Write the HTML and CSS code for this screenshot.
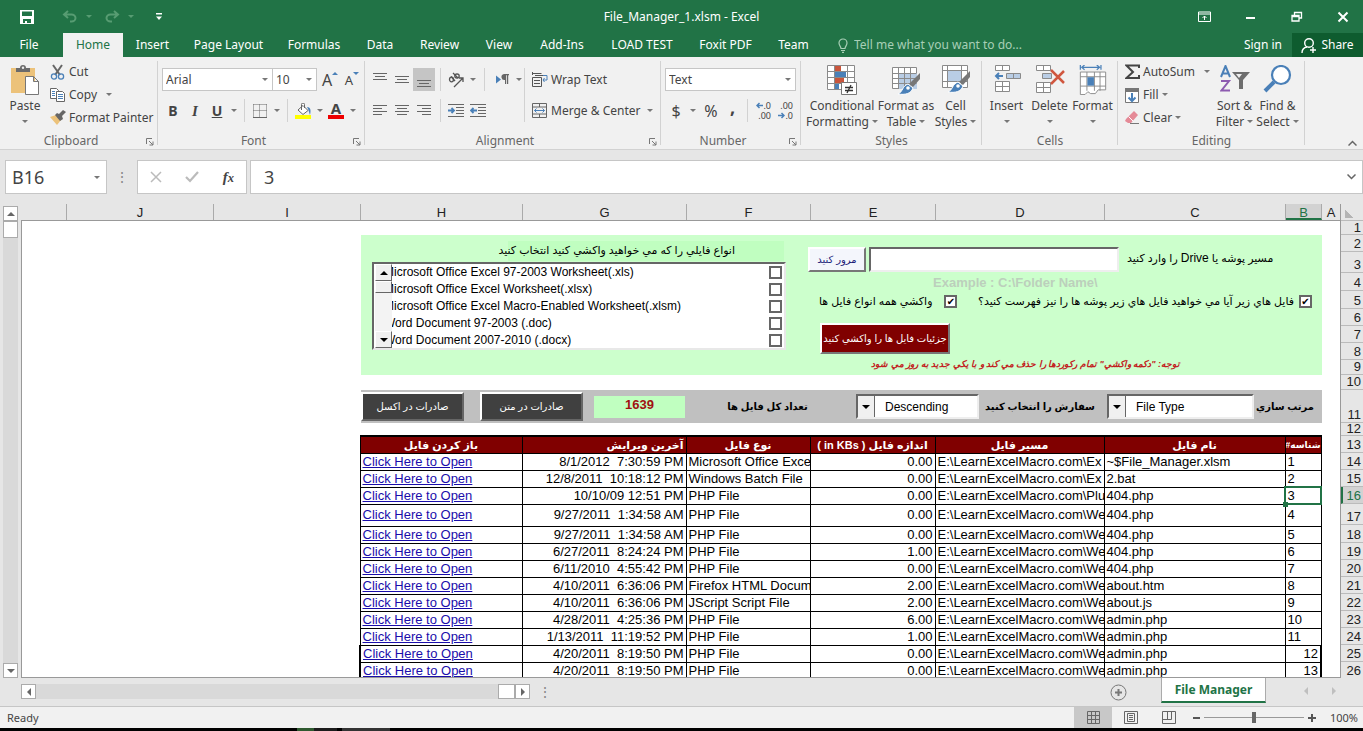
FILE: index.html
```html
<!DOCTYPE html>
<html lang="en">
<head>
<meta charset="utf-8">
<title>File_Manager_1.xlsm - Excel</title>
<link rel="stylesheet" href="styles.css">
</head>
<body>
<header class="titlebar">
  <div class="quick">
    <button class="bare save" aria-label="Save"><svg width="14" height="14" viewBox="0 0 14 14"><path fill="#fff" fill-rule="evenodd" d="M0 0h14v14H0zM2 1.500v4.500h10V1.500zM3 9v4h2v-2h2v2h4V9z"/></svg></button>
    <button class="bare undo" aria-label="Undo"><svg width="16" height="13" viewBox="0 0 16 13" fill="none" stroke="#579c72" stroke-width="2"><path d="M6 1 2 4.500 6 8M2 4.500h7.500a4 3.500 0 0 1 0 7H8"/></svg><i class="caret dim"></i></button>
    <button class="bare redo" aria-label="Redo"><svg width="16" height="13" viewBox="0 0 16 13" fill="none" stroke="#579c72" stroke-width="2"><path d="M10 1l4 3.500L10 8M14 4.500H6.500a4 3.500 0 0 0 0 7H8"/></svg><i class="caret dim"></i></button>
    <button class="bare more" aria-label="Customize"><svg width="7" height="8" viewBox="0 0 7 8" fill="#fff"><path d="M0 0h6v1.500H0zM0 3.500h6L3 7z"/></svg></button>
  </div>
  <h1 class="title">File_Manager_1.xlsm - Excel</h1>
  <div class="window-buttons">
    <button class="bare" aria-label="Ribbon options"><svg width="14" height="12" viewBox="0 0 14 12" fill="none" stroke="#fff"><path d="M.5 1h12v9.500H.5zM.5 3h12M6.500 9V5M4.500 7l2-2 2 2"/></svg></button>
    <button class="bare" aria-label="Minimize"><svg width="12" height="12" viewBox="0 0 12 12"><path fill="#fff" d="M1 6h9v2H1z"/></svg></button>
    <button class="bare" aria-label="Restore"><svg width="12" height="12" viewBox="0 0 12 12" fill="none" stroke="#fff" stroke-width="1.300"><path d="M1 4.500h7V10H1zM1 5.500h7M3.500 4V1.500h7V7H8"/></svg></button>
    <button class="bare" aria-label="Close"><svg width="12" height="12" viewBox="0 0 12 12" stroke="#fff" stroke-width="2"><path d="M1.500 1.500l9 9M10.500 1.500l-9 9"/></svg></button>
  </div>
</header>
<nav class="tabs">
  <div class="tab-list">
    <button class="tab file">File</button><button class="tab active">Home</button><button class="tab">Insert</button><button class="tab">Page Layout</button><button class="tab">Formulas</button><button class="tab">Data</button><button class="tab">Review</button><button class="tab">View</button><button class="tab">Add-Ins</button><button class="tab">LOAD TEST</button><button class="tab">Foxit PDF</button><button class="tab">Team</button>
  </div>
  <label class="tell"><svg width="10" height="15" viewBox="0 0 10 15" fill="none" stroke="#a8cfb6" stroke-width="1.200"><path d="M3 10.500c0-2-2-3-2-5.500a4 4 0 0 1 8 0c0 2.500-2 3.500-2 5.500zM3 12.500h4M4 14.300h2"/></svg><input type="text" placeholder="Tell me what you want to do..." aria-label="Tell me"></label>
  <button class="bare sign-in">Sign in</button>
  <button class="bare share"><svg width="16" height="17" viewBox="0 0 16 17" fill="none" stroke="#fff" stroke-width="1.400"><circle cx="8" cy="6" r="4.300"/><path d="M1 16c0-4 2-5.500 5-6M12 10v6M9 13h6"/></svg>Share</button>
</nav>

<section class="ribbon">
  <div class="group clipboard">
    <div class="group-body">
      <button class="big paste"><svg width="30" height="30" viewBox="0 0 30 30"><path fill="#ecc27a" d="M1 3h24v25H1z"/><path fill="#6b6b6b" d="M6 7V3h4a3 3 0 0 1 6 0h4v4z"/><circle cx="13" cy="2.800" r="1.200" fill="#eee"/><path fill="#fff" stroke="#777" d="M15.500 11.500h8l5 5v13h-13zM23.500 11.500v5h5"/></svg>Paste<i class="caret"></i></button>
      <div class="stack">
        <button class="small"><svg width="16" height="16" viewBox="0 0 16 16" fill="none"><path stroke="#666" stroke-width="2" d="M3 1l7 10M12 1L5 11"/><g stroke="#4a80b8" stroke-width="1.300"><circle cx="4" cy="12.500" r="2.600"/><circle cx="11" cy="12.500" r="2.600"/></g></svg>Cut</button>
        <button class="small"><svg width="16" height="16" viewBox="0 0 16 16" fill="#fff" stroke="#666"><path d="M.5 1.500h6l2 2v8h-8z"/><path stroke="#4a80b8" d="M2 4.500h3M2 6.500h3M2 8.500h3"/><path d="M6.500 4.500h6l2 2v8h-8z"/><path stroke="#4a80b8" d="M8 7.500h5M8 9.500h5M8 11.500h5"/></svg>Copy<i class="caret after"></i></button>
        <button class="small"><svg width="16" height="16" viewBox="0 0 16 16"><path fill="#ecc27a" d="M0 7l6-2 5 5-4 5z"/><path fill="#666" d="M5 5l2-2 2 1 4-4 3 2-4 4 1 3-3 2z"/></svg>Format Painter</button>
      </div>
    </div>
    <div class="group-label">Clipboard<svg class="launch" width="8" height="8" viewBox="0 0 8 8" fill="none" stroke="#777"><path d="M.5 6V.5H6M3 3l4 4M7 3.500V7H3.500"/></svg></div>
  </div>

  <div class="group font">
    <div class="group-body rows">
      <div class="tool-row">
        <label class="combo family"><input type="text" value="Arial" aria-label="Font"><i class="caret"></i></label>
        <label class="combo size"><input type="text" value="10" aria-label="Font size"><i class="caret"></i></label>
        <button class="tool grow">A<i class="mark up"></i></button><button class="tool shrink">A<i class="mark down"></i></button>
      </div>
      <div class="tool-row">
        <button class="tool"><b>B</b></button><button class="tool"><em>I</em></button><button class="tool"><u>U</u></button><button class="drop" aria-label="Underline"><i class="caret"></i></button><span class="sep"></span>
        <button class="tool" aria-label="Borders"><svg width="14" height="14" viewBox="0 0 14 14" fill="none" stroke="#666"><path stroke-dasharray="1 1" d="M.5.5h13M.5.5v13M13.500.5v13M.5 6.500h13M6.500.5v13"/><path d="M0 13.500h14"/></svg></button><button class="drop" aria-label="Borders menu"><i class="caret"></i></button><span class="sep"></span>
        <button class="tool" aria-label="Fill color"><svg width="17" height="16" viewBox="0 0 17 16"><path fill="#ff0" d="M0 12h16v4H0z"/><path fill="#fff" stroke="#666" d="M8 2.500l5 5-5 4-5-4.500zM6.500 7V1.500a1.500 1.500 0 0 1 3 0V5"/><path fill="#4a80b8" d="M12 4c4 0 4 4 3 8-1-2-1-5-3-8z"/></svg></button><button class="drop" aria-label="Fill menu"><i class="caret"></i></button>
        <button class="tool color" aria-label="Font color">A</button><button class="drop" aria-label="Font color menu"><i class="caret"></i></button>
      </div>
    </div>
    <div class="group-label">Font<svg class="launch" width="8" height="8" viewBox="0 0 8 8" fill="none" stroke="#777"><path d="M.5 6V.5H6M3 3l4 4M7 3.500V7H3.500"/></svg></div>
  </div>

  <div class="group alignment">
    <div class="group-body">
      <div class="rows align-tools">
        <div class="tool-row">
          <button class="tool" aria-label="Top align"><svg width="14" height="16" viewBox="0 0 14 16" stroke="#666"><path d="M0 1.500h14M2 4.500h10M0 7.500h14"/></svg></button>
          <button class="tool" aria-label="Middle align"><svg width="14" height="16" viewBox="0 0 14 16" stroke="#666"><path d="M0 4.500h14M2 7.500h10M0 10.500h14"/></svg></button>
          <button class="tool pressed" aria-label="Bottom align"><svg width="14" height="16" viewBox="0 0 14 16" stroke="#666"><path d="M0 8.500h14M2 11.500h10M0 14.500h14"/></svg></button>
          <span class="sep"></span>
          <button class="tool" aria-label="Orientation"><svg width="17" height="17" viewBox="0 0 17 17" fill="none" stroke="#555" stroke-width="1.300"><path d="M6 16L15 7M11 7h4v4"/><ellipse cx="3.500" cy="8.500" rx="2" ry="2.300"/><path d="M3 5.500l4 4.500M5 2l5 5"/><ellipse cx="9" cy="5" rx="2.200" ry="2"/></svg></button><button class="drop" aria-label="Orientation menu"><i class="caret"></i></button>
          <span class="sep wide"></span>
          <button class="tool" aria-label="Text direction"><svg width="13" height="11" viewBox="0 0 13 11"><path fill="#4a80b8" d="M0 1.500l5 4-5 4z"/><path fill="#666" d="M8 0h5v1.200h-.8V10H11V1.200h-.8V10H9V6a3 3 0 0 1-1-6z"/></svg></button><button class="drop" aria-label="Direction menu"><i class="caret"></i></button>
        </div>
        <div class="tool-row">
          <button class="tool" aria-label="Left"><svg width="14" height="12" viewBox="0 0 14 12" stroke="#666"><path d="M0 .5h14M0 3.500h9M0 6.500h14M0 9.500h9"/></svg></button>
          <button class="tool" aria-label="Center"><svg width="14" height="12" viewBox="0 0 14 12" stroke="#666"><path d="M0 .5h14M2 3.500h10M0 6.500h14M2 9.500h10"/></svg></button>
          <button class="tool" aria-label="Right"><svg width="14" height="12" viewBox="0 0 14 12" stroke="#666"><path d="M0 .5h14M5 3.500h9M0 6.500h14M5 9.500h9"/></svg></button>
          <span class="sep"></span>
          <button class="tool" aria-label="Decrease indent"><svg width="16" height="14" viewBox="0 0 16 14" fill="none"><path stroke="#666" d="M0 .5h16M8 3.500h8M8 6.500h8M8 9.500h8M0 12.500h16"/><path stroke="#4a80b8" stroke-width="1.800" d="M0 6.500h6M3.500 4L6 6.500 3.500 9"/></svg></button>
          <button class="tool" aria-label="Increase indent"><svg width="16" height="14" viewBox="0 0 16 14" fill="none"><path stroke="#666" d="M0 .5h16M8 3.500h8M8 6.500h8M8 9.500h8M0 12.500h16"/><path stroke="#4a80b8" stroke-width="1.800" d="M1 6.500h6M3.500 4L1 6.500 3.500 9"/></svg></button>
        </div>
      </div>
      <div class="rows wrap-tools">
        <button class="small"><svg width="16" height="16" viewBox="0 0 16 16" fill="none" stroke="#555"><path d="M.5 0v3M.5 1.500h9M.5 5.500h9v9h-9zM2 8.500h6M2 11.500h6M3 3.500h8"/><path stroke="#4a80b8" d="M11 3.500h4v4.500h-4M12.500 6L11 8l1.500 2"/></svg>Wrap Text</button>
        <button class="small"><svg width="16" height="16" viewBox="0 0 16 16" fill="none" stroke="#666"><path d="M.5.5h14v14H.5zM.5 4h14M.5 11h14M7.500.5V4M7.500 11v3.500"/><path stroke="#4a80b8" d="M2.500 7.500h10M4.500 5.500l-2 2 2 2M10.500 5.500l2 2-2 2"/></svg>Merge &amp; Center<i class="caret near"></i></button>
      </div>
    </div>
    <div class="group-label">Alignment<svg class="launch" width="8" height="8" viewBox="0 0 8 8" fill="none" stroke="#777"><path d="M.5 6V.5H6M3 3l4 4M7 3.500V7H3.500"/></svg></div>
  </div>

  <div class="group number">
    <div class="group-body rows">
      <div class="tool-row">
        <label class="combo format"><input type="text" value="Text" aria-label="Number format"><i class="caret"></i></label>
      </div>
      <div class="tool-row">
        <button class="tool sign">$</button><button class="drop" aria-label="Currency menu"><i class="caret"></i></button><button class="tool sign percent-sign">%</button><button class="tool comma"><b>,</b></button><span class="sep"></span>
        <button class="tool decimals"><span><svg width="7" height="7" viewBox="0 0 7 7" fill="none" stroke="#4a80b8" stroke-width="1.500"><path d="M7 3.500H1M3.500 1L1 3.500 3.500 6"/></svg>.0</span><span>.00</span></button><button class="tool decimals wide"><span>.00</span><span><svg width="7" height="7" viewBox="0 0 7 7" fill="none" stroke="#4a80b8" stroke-width="1.500"><path d="M0 3.500h6M3.500 1L6 3.500 3.500 6"/></svg>.0</span></button>
      </div>
    </div>
    <div class="group-label">Number<svg class="launch" width="8" height="8" viewBox="0 0 8 8" fill="none" stroke="#777"><path d="M.5 6V.5H6M3 3l4 4M7 3.500V7H3.500"/></svg></div>
  </div>

  <div class="group styles">
    <div class="group-body">
      <button class="big"><svg width="30" height="30" viewBox="0 0 30 30"><path fill="#fff" stroke="#8a8a8a" d="M.5.5h27v24H.5zM7.500.5v24M20.500.5v24M.5 6.500h27M.5 12.500h27M.5 18.500h27"/><path fill="#c9553c" d="M8 1h6v5H8zM8 13h9v5H8z"/><path fill="#4a80b8" d="M8 7h11v5H8zM8 19h4v5H8z"/><path fill="#fff" stroke="#777" d="M14.500 17.500h15v12h-15z"/><path stroke="#333" stroke-width="1.300" d="M18 22.500h8M18 25.500h8M24 20l-4 8"/></svg><span>Conditional<br>Formatting<i class="caret inline"></i></span></button>
      <button class="big"><svg width="30" height="30" viewBox="0 0 30 30"><path fill="#fff" stroke="#8a8a8a" d="M1.500 2.500h24v21h-24z"/><path fill="#b9cde5" d="M8 8h18v16H8z"/><path fill="none" stroke="#8a8a8a" d="M1.500 8.500h24M1.500 13.500h24M1.500 18.500h24M7.500 2.500v21M13.500 2.500v21M19.500 2.500v21"/><path fill="#777" d="M29 8v6l-7 8-4-3z"/><path fill="#4a80b8" stroke="#fff" d="M17 19l5 4c-2 6-8 7-15 6 5-2 4-8 10-10z"/><circle cx="17" cy="23" r="1.800" fill="#fff"/></svg><span>Format as<br>Table<i class="caret inline"></i></span></button>
      <button class="big"><svg width="30" height="30" viewBox="0 0 30 30"><path fill="#fff" stroke="#8a8a8a" d="M1.500.5h25v22h-25zM1.500 5.500h25M1.500 16.500h25M6.500.5v22M20.500.5v22"/><path fill="#b9cde5" d="M7 6h13v10H7z"/><path fill="#777" d="M29 6v6l-7 8-4-3z"/><path fill="#4a80b8" stroke="#fff" d="M17 17l5 4c-2 6-8 7-15 6 5-2 4-8 10-10z"/><circle cx="17" cy="21" r="1.800" fill="#fff"/></svg><span>Cell<br>Styles<i class="caret inline"></i></span></button>
    </div>
    <div class="group-label">Styles</div>
  </div>

  <div class="group cells">
    <div class="group-body">
      <button class="big"><svg width="30" height="30" viewBox="0 0 30 30"><path fill="#fff" stroke="#8a8a8a" d="M3.500.5h14v5h-14zM10.500.5v5M3.500 16.500h14v10h-14zM10.500 16.500v10M3.500 21.500h14"/><path fill="#b9cde5" stroke="#8a8a8a" d="M14.500 8.500h14v5h-14zM21.500 8.500v5"/><path fill="none" stroke="#4a80b8" stroke-width="2" d="M11 11H4M7 8l-3 3 3 3"/></svg>Insert<i class="caret"></i></button>
      <button class="big"><svg width="30" height="30" viewBox="0 0 30 30"><path fill="#fff" stroke="#8a8a8a" d="M1.500.5h14v5h-14zM8.500.5v5M1.500 17.500h14v10h-14zM8.500 17.500v10M1.500 22.500h14"/><path fill="#b9cde5" stroke="#8a8a8a" d="M7.500 8.500h9v5h-9z"/><path fill="none" stroke="#d0573f" stroke-width="2.500" d="M16 5l13 13M29 6L16 19"/></svg>Delete<i class="caret"></i></button>
      <button class="big"><svg width="30" height="32" viewBox="0 0 30 32"><path fill="none" stroke="#4a80b8" stroke-width="1.300" d="M1.500 0v5M23.500 0v5M3 2.500h19M6 0L3 2.500 6 5M19 0l3 2.500L19 5"/><path fill="#fff" stroke="#8a8a8a" d="M1.500 7.500h27v19h-8l-3 4h-5l-3-2-3 3h-5zM1.500 12.500h27M1.500 22.500h27M8.500 7.500v20M16.500 7.500v20M22.500 7.500v20"/><path fill="#4a80b8" d="M9 13h7v9H9z"/></svg>Format<i class="caret"></i></button>
    </div>
    <div class="group-label">Cells</div>
  </div>

  <div class="group editing">
    <div class="group-body">
      <div class="stack">
        <button class="small"><svg width="15" height="16" viewBox="0 0 15 16" fill="none" stroke="#444" stroke-width="2"><path d="M14 4V1.500H1.500L8 8l-6.500 6H14V11"/></svg>AutoSum<i class="caret after"></i></button>
        <button class="small"><svg width="15" height="16" viewBox="0 0 15 16"><path fill="#fff" stroke="#777" d="M.5 1.500h13v14H.5z"/><path fill="#777" d="M0 1h14v4H0z"/><path fill="none" stroke="#4a80b8" stroke-width="2" d="M7 6v8M3.500 10.500L7 14l3.500-3.500"/></svg>Fill<i class="caret"></i></button>
        <button class="small"><svg width="15" height="16" viewBox="0 0 15 16"><path fill="#e58a97" d="M1 9l8-8 4 4-7 8H3l-3-2z"/><path stroke="#fff" d="M3.500 6.500l5 5"/><path stroke="#777" d="M5 13.500h9"/></svg>Clear<i class="caret"></i></button>
      </div>
      <button class="big sort"><svg width="30" height="30" viewBox="0 0 30 30" fill="none"><path stroke="#4a80b8" stroke-width="2" d="M1 12L5.500 1 10 12M2.500 8.500h6"/><path stroke="#8d5bb0" stroke-width="2" d="M1 16h8L1.500 25.500H10"/><path fill="#6d6d6d" d="M12 7h18l-7 8v9h-4v-9z"/><path fill="#eee" d="M16 9h6l-3 4z"/></svg><span>Sort &amp;<br>Filter<i class="caret inline"></i></span></button>
      <button class="big"><svg width="30" height="30" viewBox="0 0 30 30" fill="none" stroke="#4a80b8"><path stroke-width="4" d="M2 26L11 17"/><circle cx="18" cy="10" r="9" fill="#fff" stroke-width="2.200"/></svg><span>Find &amp;<br>Select<i class="caret inline"></i></span></button>
    </div>
    <div class="group-label">Editing</div>
  </div>
  <button class="bare collapse" aria-label="Collapse ribbon"><svg width="9" height="6" viewBox="0 0 9 6" fill="none" stroke="#666" stroke-width="1.500"><path d="M.5 5.500l4-4 4 4"/></svg></button>
</section>

<section class="formula-bar">
  <label class="name-box"><input type="text" value="B16" aria-label="Name box"><i class="caret"></i></label>
  <span class="dots">⋮</span>
  <div class="fx-box">
    <svg width="12" height="12" viewBox="0 0 12 12" stroke="#bbb" stroke-width="1.500"><path d="M1 1l10 10M11 1L1 11"/></svg>
    <svg width="14" height="12" viewBox="0 0 14 12" fill="none" stroke="#bbb" stroke-width="2.200"><path d="M1 6l4 4 8-9"/></svg>
    <span class="fx">f<small>x</small></span>
  </div>
  <label class="formula"><input type="text" value="3" aria-label="Formula"><svg width="9" height="6" viewBox="0 0 9 6" fill="none" stroke="#666" stroke-width="1.500"><path d="M.5.5l4 4 4-4"/></svg></label>
</section>

<main class="workbook">
  <div class="vscroll"><button class="arrow" aria-label="Scroll up"><i class="tri up"></i></button><span class="thumb"></span><span class="track"></span><button class="arrow" aria-label="Scroll down"><i class="tri down"></i></button></div>
  <div class="sheet">
    <div class="col-heads"><span class="blank"></span><span class="w-j">J</span><span class="w-j">I</span><span class="w-h">H</span><span class="w-g">G</span><span class="w-f">F</span><span class="w-e">E</span><span class="w-d">D</span><span class="w-c">C</span><span class="w-b selected">B</span><span class="w-a">A</span></div>
    <div class="canvas">
      <div class="area">
        <form class="options">
          <fieldset class="types">
            <legend dir="rtl">انواع فايلي را که مي خواهيد واکشي کنيد انتخاب کنيد</legend>
            <div class="listbox">
              <div class="old-scroll"><button type="button" aria-label="Up"><i class="tri up"></i></button><span class="old-thumb"></span><span class="old-track"></span><button type="button" aria-label="Down"><i class="tri down"></i></button></div>
              <div class="choices">
                <label><span>Microsoft Office Excel 97-2003 Worksheet(.xls)</span><input type="checkbox"></label>
                <label><span>Microsoft Office Excel Worksheet(.xlsx)</span><input type="checkbox"></label>
                <label><span>Microsoft Office Excel Macro-Enabled Worksheet(.xlsm)</span><input type="checkbox"></label>
                <label><span>Word Document 97-2003 (.doc)</span><input type="checkbox"></label>
                <label><span>Word Document 2007-2010 (.docx)</span><input type="checkbox"></label>
              </div>
            </div>
          </fieldset>
          <div class="source">
            <div class="path-row"><button type="button" class="browse">مرور کنيد</button><input id="path" class="path" type="text"><label for="path" dir="rtl">مسير پوشه يا <span class="latin">Drive</span> را وارد کنيد</label></div>
            <p class="example">Example : C:\Folder Name\</p>
            <div class="check-row">
              <label class="all"><span dir="rtl">واکشي همه انواع فايل ها</span><input type="checkbox" checked></label>
              <label class="sub"><span dir="rtl">فايل هاي زير آيا مي خواهيد فايل هاي زير پوشه ها را نيز فهرست کنيد؟</span><input type="checkbox" checked></label>
            </div>
            <button type="button" class="fetch">جزئيات فايل ها را واکشي کنيد</button>
            <p class="note" dir="rtl">توجه: "دکمه واکشي" تمام رکوردها را حذف مي کند و با يکي جديد به روز مي شود</p>
          </div>
        </form>
        <div class="sortbar">
          <button class="export">صادرات در اکسل</button>
          <button class="export text">صادرات در متن</button>
          <output class="count">1639</output>
          <span class="bar-label total" dir="rtl">تعداد کل فايل ها</span>
          <div class="picker"><i class="pick-arrow"></i><select id="order"><option>Descending</option></select></div>
          <label for="order" class="bar-label" dir="rtl">سفارش را انتخاب کنيد</label>
          <div class="picker"><i class="pick-arrow"></i><select id="by"><option>File Type</option></select></div>
          <label for="by" class="bar-label" dir="rtl">مرتب سازي</label>
        </div>
        <table class="files">
          <colgroup><col class="w-h"><col class="w-g"><col class="w-f"><col class="w-e"><col class="w-d"><col class="w-c"><col class="w-b"></colgroup>
          <thead><tr><th>باز کردن فايل</th><th class="end">آخرين ويرايش</th><th>نوع فايل</th><th dir="rtl">اندازه فايل ( in KBs )</th><th>مسير فايل</th><th>نام فايل</th><th class="id" dir="rtl">شناسه#</th></tr></thead>
          <tbody>
            <tr><td><a href="#">Click Here to Open</a></td><td class="end">8/1/2012  7:30:59 PM</td><td>Microsoft Office Exce</td><td class="end">0.00</td><td>E:\LearnExcelMacro.com\Ex</td><td>~$File_Manager.xlsm</td><td>1</td></tr>
            <tr><td><a href="#">Click Here to Open</a></td><td class="end">12/8/2011  10:18:12 PM</td><td>Windows Batch File</td><td class="end">0.00</td><td>E:\LearnExcelMacro.com\Ex</td><td>2.bat</td><td>2</td></tr>
            <tr><td><a href="#">Click Here to Open</a></td><td class="end">10/10/09 12:51 PM</td><td>PHP File</td><td class="end">0.00</td><td>E:\LearnExcelMacro.com\Plu</td><td>404.php</td><td class="current">3</td></tr>
            <tr class="tall"><td><a href="#">Click Here to Open</a></td><td class="end">9/27/2011  1:34:58 AM</td><td>PHP File</td><td class="end">0.00</td><td>E:\LearnExcelMacro.com\We</td><td>404.php</td><td>4</td></tr>
            <tr><td><a href="#">Click Here to Open</a></td><td class="end">9/27/2011  1:34:58 AM</td><td>PHP File</td><td class="end">0.00</td><td>E:\LearnExcelMacro.com\We</td><td>404.php</td><td>5</td></tr>
            <tr><td><a href="#">Click Here to Open</a></td><td class="end">6/27/2011  8:24:24 PM</td><td>PHP File</td><td class="end">1.00</td><td>E:\LearnExcelMacro.com\We</td><td>404.php</td><td>6</td></tr>
            <tr><td><a href="#">Click Here to Open</a></td><td class="end">6/11/2010  4:55:42 PM</td><td>PHP File</td><td class="end">0.00</td><td>E:\LearnExcelMacro.com\We</td><td>404.php</td><td>7</td></tr>
            <tr><td><a href="#">Click Here to Open</a></td><td class="end">4/10/2011  6:36:06 PM</td><td>Firefox HTML Docum</td><td class="end">2.00</td><td>E:\LearnExcelMacro.com\We</td><td>about.htm</td><td>8</td></tr>
            <tr><td><a href="#">Click Here to Open</a></td><td class="end">4/10/2011  6:36:06 PM</td><td>JScript Script File</td><td class="end">2.00</td><td>E:\LearnExcelMacro.com\We</td><td>about.js</td><td>9</td></tr>
            <tr><td><a href="#">Click Here to Open</a></td><td class="end">4/28/2011  4:25:36 PM</td><td>PHP File</td><td class="end">6.00</td><td>E:\LearnExcelMacro.com\We</td><td>admin.php</td><td>10</td></tr>
            <tr><td><a href="#">Click Here to Open</a></td><td class="end">1/13/2011  11:19:52 PM</td><td>PHP File</td><td class="end">1.00</td><td>E:\LearnExcelMacro.com\We</td><td>admin.php</td><td>11</td></tr>
            <tr class="thick"><td><a href="#">Click Here to Open</a></td><td class="end">4/20/2011  8:19:50 PM</td><td>PHP File</td><td class="end">0.00</td><td>E:\LearnExcelMacro.com\We</td><td>admin.php</td><td class="end">12</td></tr>
            <tr class="thick"><td><a href="#">Click Here to Open</a></td><td class="end">4/20/2011  8:19:50 PM</td><td>PHP File</td><td class="end">0.00</td><td>E:\LearnExcelMacro.com\We</td><td>admin.php</td><td class="end">13</td></tr>
          </tbody>
        </table>
      </div>
    </div>
  </div>
  <div class="row-heads"><span class="corner"></span><span class="r14">1</span><span>2</span><span class="r21">3</span><span class="r18">4</span><span class="r18">5</span><span>6</span><span>7</span><span>8</span><span class="r15">9</span><span class="r15">10</span><span class="r33">11</span><span class="r13">12</span><span>13</span><span>14</span><span>15</span><span class="selected">16</span><span class="r21">17</span><span class="r18">18</span><span>19</span><span>20</span><span>21</span><span>22</span><span>23</span><span>24</span><span>25</span><span>26</span></div>
</main>

<section class="sheet-bar">
  <div class="hscroll"><button class="arrow" aria-label="Scroll left"><i class="tri left"></i></button><span class="track"></span><span class="thumb"></span><button class="arrow" aria-label="Scroll right"><i class="tri right"></i></button></div>
  <span class="dots">⋮</span>
  <div class="sheet-tabs">
    <button class="bare" aria-label="New sheet"><svg width="17" height="17" viewBox="0 0 17 17" fill="none" stroke="#777"><circle cx="8.500" cy="8.500" r="7.500"/><path stroke-width="2" d="M8.500 5v7M5 8.500h7"/></svg></button>
    <button class="sheet-tab">File Manager</button>
    <span class="sheet-nav"><i class="tri left"></i><i class="tri right"></i></span>
  </div>
</section>

<footer class="status">
  <span class="ready">Ready</span>
  <button class="view on" aria-label="Normal"><svg width="13" height="13" viewBox="0 0 13 13" fill="none" stroke="#666"><path d="M.5.5h12v12H.5zM4.500.5v12M8.500.5v12M.5 4.500h12M.5 8.500h12"/></svg></button>
  <button class="view" aria-label="Page layout"><svg width="14" height="13" viewBox="0 0 14 13" fill="none" stroke="#666"><path d="M.5.5h13v12H.5zM3.500 2.500h7v8h-7zM5 4.500h4M5 6.500h4M5 8.500h4"/></svg></button>
  <button class="view" aria-label="Page break"><svg width="14" height="13" viewBox="0 0 14 13" fill="none" stroke="#666"><path d="M.5.5h13v12H.5zM.5 8.500h9v-8M5.500.5v8"/></svg></button>
  <button class="zoom-btn" aria-label="Zoom out"><svg width="7" height="7" viewBox="0 0 7 7"><path fill="#555" d="M0 3h7v2H0z"/></svg></button>
  <input class="zoom" type="range" min="0" max="100" value="50" aria-label="Zoom">
  <button class="zoom-btn" aria-label="Zoom in"><svg width="8" height="8" viewBox="0 0 8 8"><path fill="#555" d="M0 3h3V0h2v3h3v2H5v3H3V5H0z"/></svg></button>
  <span class="percent">100%</span>
</footer>
<div class="taskbar"><span class="run"></span><span class="idle"></span><span class="open"></span></div>
</body>
</html>
```
FILE: styles.css
```css
* { box-sizing: border-box; }
html, body { height: 100%; }
body {
  margin: 0;
  display: flex;
  flex-direction: column;
  overflow: hidden;
  background: #e6e6e6;
  color: #444;
  font: 12px/16px "Noto Sans", "Open Sans", sans-serif;
}
button, input, select { font: inherit; color: inherit; margin: 0; padding: 0; border: 0; border-radius: 0; background: none; }
button { white-space: nowrap; }
svg { flex: none; display: block; }
i { font-style: normal; }
p, h1 { margin: 0; }

.caret { flex: none; width: 0; height: 0; border: 3px solid transparent; border-top-color: #777; border-bottom: 0; }
.caret.dim { border-top-color: #579c72; }
.caret.after { margin-left: 6px; }
.caret.near { margin-left: 3px; }
.caret.inline { display: inline-block; margin-left: 3px; vertical-align: 3px; }
.tri { width: 0; height: 0; border: 4px solid transparent; }
.tri.up { border-bottom-color: #666; border-top: 0; }
.tri.down { border-top-color: #666; border-bottom: 0; }
.tri.left { border-right-color: #666; border-left: 0; }
.tri.right { border-left-color: #666; border-right: 0; }
.bare { display: flex; align-items: center; justify-content: center; }

/* Title bar */
.titlebar { flex: none; height: 33px; display: grid; grid-template-columns: 1fr auto 1fr; align-items: center; background: #217346; color: #fff; }
.quick { display: flex; align-items: center; gap: 12px; padding-left: 20px; height: 30px; }
.quick .bare { gap: 8px; }
.quick .undo { margin-left: 16px; }
.quick .more { margin-left: 10px; }
.title { font-size: 12px; font-weight: 400; }
.window-buttons { display: flex; justify-content: flex-end; height: 30px; padding-right: 2px; }
.window-buttons .bare { width: 46px; }
.window-buttons .bare:last-child { width: 36px; margin-left: 5px; }

/* Tabs */
.tabs { flex: none; height: 24px; display: flex; background: #217346; color: #fff; }
.tab-list { display: grid; grid-template-columns: 63px 60px 59px 93px 78px 54px 65px 54px 72px 88px 79px 57px; }
.tab { line-height: 24px; }
.tab.file { padding-right: 5px; }
.tab.active { background: #f1f1f1; color: #217346; }
.tell { flex: 1; display: flex; align-items: center; gap: 6px; padding-left: 16px; }
.tell input { flex: 1; min-width: 0; }
.tell input::placeholder { color: #a8cfb6; opacity: 1; }
.sign-in { padding: 0 10px; }
.share { width: 71px; gap: 4px; background: #0e5c2f; }

/* Ribbon */
.ribbon { flex: none; height: 93px; display: flex; background: #f1f1f1; border-bottom: 1px solid #d2d2d2; }
.group { display: flex; flex-direction: column; position: relative; }
.group::after { content: ""; position: absolute; right: 0; top: 4px; bottom: 4px; width: 1px; background: #d2d2d2; }
.group-body { flex: 1; display: flex; }
.group-label { height: 16px; display: flex; align-items: center; justify-content: center; color: #666; position: relative; }
.launch { position: absolute; right: 4px; bottom: 3px; }
.clipboard { width: 158px; }
.font { width: 207px; }
.clipboard .group-label, .font .group-label, .alignment .group-label, .number .group-label { padding-right: 16px; }
.alignment { width: 296px; }
.number { width: 140px; }
.styles { width: 181px; }
.cells { width: 136px; }
.editing { width: 187px; }
.big { display: flex; flex-direction: column; align-items: center; padding-top: 8px; line-height: 16px; }
.big svg { height: 30px; margin-bottom: 3px; }
.big > .caret { margin-top: 6px; }
.paste { width: 50px; }
.stack { display: flex; flex-direction: column; padding-top: 3px; }
.small { height: 23px; display: flex; align-items: center; gap: 3px; }
.rows { flex-direction: column; gap: 8px; padding: 11px 0 0 4px; }
.tool-row { display: flex; align-items: center; height: 23px; }
.tool { width: 22px; height: 23px; display: flex; align-items: center; justify-content: center; font-size: 14px; }
.tool.pressed { background: #c5c5c5; }
.tool em { font-family: "Liberation Serif", serif; font-weight: 700; font-size: 15px; }
.tool u { font-weight: 700; }
.drop { width: 11px; height: 23px; display: flex; align-items: center; justify-content: center; }
.sep { width: 10px; height: 23px; background: linear-gradient(#d2d2d2, #d2d2d2) center / 1px 100% no-repeat; }
.sep.wide { width: 13px; }
.combo { display: flex; align-items: center; height: 23px; background: #fff; border: 1px solid #c6c6c6; padding: 0 4px 0 3px; }
.combo input { flex: 1; min-width: 0; width: 20px; }
.family { width: 111px; }
.size { width: 44px; border-left: 0; }
.format { width: 131px; }
.tool.grow { font-size: 16px; margin-left: 2px; }
.tool.shrink { font-size: 13px; }
.mark { align-self: flex-start; margin-top: 4px; border: 3px solid transparent; }
.mark.up { border-bottom: 3px solid #4a80b8; border-top: 0; }
.mark.down { border-top: 3px solid #4a80b8; border-bottom: 0; }
.tool.color { height: 17px; padding-bottom: 4px; font-size: 15px; font-weight: 700; line-height: 13px; background: linear-gradient(#e00, #e00) center bottom / 16px 4px no-repeat; }
.align-tools { display: flex; width: 160px; background: linear-gradient(#d2d2d2, #d2d2d2) right 11px / 1px 54px no-repeat; }
.wrap-tools { display: flex; padding-left: 7px; }
.tool.sign { font-size: 16px; }
.tool.percent-sign { width: 26px; }
.tool.comma { width: 17px; font-size: 18px; align-items: flex-start; line-height: 16px; }
.number .sep { width: 12px; }
.tool.decimals { width: 18px; flex-direction: column; align-items: flex-end; font-size: 9px; line-height: 10px; }
.tool.decimals.wide { width: 22px; }
.decimals span { display: flex; align-items: center; }
.styles .group-body { display: grid; grid-template-columns: 72px 56px 43px; padding-left: 5px; }
.cells .group-body { display: grid; grid-template-columns: 43px 43px 43px; padding-left: 3px; }
.editing .group-body { display: grid; grid-template-columns: 88px 43px 43px; padding-left: 7px; }
.collapse { margin: 0 6px 3px auto; align-self: flex-end; }

/* Formula bar */
.formula-bar { flex: none; height: 54px; display: flex; padding: 10px 0 10px 5px; font-size: 18px; }
.formula-bar label, .fx-box { height: 34px; display: flex; align-items: center; background: #fff; border: 1px solid #c6c6c6; }
.name-box { width: 102px; padding: 0 6px; }
.name-box input { flex: 1; min-width: 0; width: 20px; }
.dots { color: #888; font-size: 14px; text-align: center; }
.formula-bar .dots { width: 30px; line-height: 34px; }
.fx-box { width: 110px; padding: 0 12px; justify-content: space-between; }
.fx { font: italic 700 15px "Liberation Serif", serif; }
.formula { flex: 1; margin-left: 3px; padding: 0 6px 0 13px; }
.formula input { flex: 1; min-width: 0; }

/* Worksheet */
.workbook { flex: 1; min-height: 0; display: flex; font-family: "Liberation Sans", "DejaVu Sans", sans-serif; }
.vscroll { width: 21px; display: flex; flex-direction: column; padding: 2px 3px 0 3px; }
.arrow, .thumb { flex: none; width: 15px; height: 15px; display: flex; align-items: center; justify-content: center; background: #fff; border: 1px solid #ababab; }
.vscroll .thumb { height: 17px; }
.track { flex: 1; background: #d9d9d9; }
.vscroll .track { width: 15px; }
.sheet { flex: 1; min-width: 0; display: flex; flex-direction: column; }
.col-heads { flex: none; height: 17px; display: flex; border-bottom: 1px solid #999; font-size: 13px; line-height: 17px; color: #222; text-align: center; }
.col-heads span { flex: none; border-right: 1px solid #aaa; }
.col-heads .blank { flex: 1; min-width: 0; }
.col-heads .selected { background: #d2d2d2; color: #217346; border-bottom: 2px solid #217346; }
.col-heads .w-a { border-right: 0; }
.w-a { width: 18px; }
.w-b { width: 36px; }
.w-c { width: 181px; }
.w-d { width: 169px; }
.w-e { width: 125px; }
.w-f { width: 124px; }
.w-g { width: 164px; }
.w-h { width: 162px; }
.w-j { width: 147px; }
.canvas { flex: 1; min-height: 0; overflow: hidden; background: #fff; border-left: 1px solid #999; border-bottom: 1px solid #999; display: flex; justify-content: flex-end; padding: 14px 18px 0 0; }
.area { flex: none; width: 961px; color: #000; }
.row-heads { flex: none; width: 23px; display: flex; flex-direction: column; overflow: hidden; border-left: 1px solid #999; font-size: 13px; color: #222; text-align: right; }
.row-heads span { flex: none; height: 17px; display: flex; align-items: flex-end; justify-content: flex-end; overflow: hidden; padding-right: 2px; line-height: 15px; border-bottom: 1px solid #bbb; }
.row-heads .corner { background: linear-gradient(45deg, #b4b4b4 50%, transparent 50%) 4px 5px / 9px 9px no-repeat; }
.row-heads .r13 { height: 13px; line-height: 13px; }
.row-heads .r14 { height: 14px; line-height: 13px; }
.row-heads .r15 { height: 15px; }
.row-heads .r18 { height: 18px; }
.row-heads .r21 { height: 21px; }
.row-heads .r33 { height: 33px; }
.row-heads .selected { background: #d2d2d2; color: #217346; border-left: 2px solid #217346; }

/* Options form */
.options { height: 140px; display: grid; grid-template-columns: 414px 1fr; column-gap: 22px; padding-left: 11px; background: #cfc; }
.types { border: 0; margin: 6px 0 0; padding: 0; min-width: 0; }
.types legend { width: 276px; height: 20px; margin: 0 2px 0 auto; padding: 0 49px 0 0; background: #c0fec0; font-size: 11px; line-height: 18px; white-space: nowrap; }
.listbox { height: 88px; margin-top: 1px; display: flex; background: #fff; border: 2px solid #666; border-right-color: #e8e8e8; border-bottom-color: #e8e8e8; padding-left: 1px; }
.old-scroll { width: 17px; display: flex; flex-direction: column; background: #f3f3f3; }
.old-scroll button, .old-thumb { height: 17px; display: flex; align-items: center; justify-content: center; background: #f0f0f0; border: 1px solid #fff; border-right-color: #666; border-bottom-color: #666; }
.old-scroll .up { border-bottom-color: #000; }
.old-scroll .down { border-top-color: #000; }
.old-scroll .old-thumb { height: 12px; }
.old-track { flex: 1; }
.choices { flex: 1; min-width: 0; }
.choices label { display: flex; align-items: center; height: 17px; padding-right: 2px; font-size: 12px; }
.choices span { flex: 1; overflow: hidden; white-space: nowrap; text-indent: -8px; line-height: 17px; }
input[type="checkbox"] { appearance: none; flex: none; display: grid; place-items: center; width: 13px; height: 13px; background: #fff; border: 2px solid #666; }
input[type="checkbox"]:checked::before { content: "✔"; color: #000; font: 700 10px/9px "DejaVu Sans", sans-serif; }
.source { display: flex; flex-direction: column; align-items: flex-start; padding-top: 12px; }
.path-row { display: flex; height: 25px; font-size: 11px; }
.path-row label { margin-left: 8px; line-height: 22px; }
.latin { font-size: 12px; }
.browse { width: 58px; background: #f4f6fc; color: #22227a; font-size: 10px; border: 2px solid #fff; border-right-color: #777; border-bottom-color: #777; }
.path { width: 250px; margin-left: 3px; background: #fff; border: 2px solid #666; border-right-color: #eee; border-bottom-color: #eee; }
.example { margin: 3px 0 0 125px; color: #bccfbc; font-size: 13px; font-weight: 700; }
.check-row { width: 100%; display: flex; justify-content: space-between; margin-top: 2px; padding: 0 10px 0 11px; font-size: 11px; }
.check-row label { display: flex; align-items: center; }
.all { gap: 12px; }
.sub { gap: 5px; }
.fetch { width: 130px; height: 31px; margin: 14px 0 0 12px; background: #800000; color: #fff; font-size: 10px; border: 2px solid #fff; border-right-color: #777; border-bottom-color: #777; }
.note { width: 300px; margin: 1px 0 0 72px; color: #c22020; font-size: 9px; font-weight: 700; font-style: italic; line-height: 18px; white-space: nowrap; }

/* Sort bar */
.sortbar { height: 33px; margin-top: 15px; display: grid; grid-template-columns: 103px 16px 103px 11px 91px 1fr 123px 128px 147px 68px; align-items: center; background: #c0c0c0; font-size: 10px; }
.export { height: 29px; background: #404040; color: #fff; border: 2px solid #fff; border-right-color: #666; border-bottom-color: #666; }
.export.text { grid-column: 3; }
.count { grid-column: 5; height: 22px; background: #c0ffc0; color: #a01010; font-size: 13px; font-weight: 700; line-height: 18px; text-align: center; }
.bar-label { font-size: 10px; font-weight: 700; text-align: center; white-space: nowrap; padding-right: 6px; }
.picker { height: 25px; display: flex; background: #fff; border: 2px solid #666; border-right-color: #eee; border-bottom-color: #eee; }
.pick-arrow { width: 17px; border-right: 1px solid #666; background: #f0f0f0; display: flex; align-items: center; justify-content: center; }
.pick-arrow::before { content: ""; border: 4px solid transparent; border-top-color: #000; border-bottom: 0; }
.picker select { appearance: none; flex: 1; min-width: 0; padding-left: 10px; font-size: 12px; }

/* File table */
.files { width: 961px; margin: 12px 0 0 -2px; table-layout: fixed; border-collapse: collapse; font-size: 13px; line-height: 16px; }
.files tr { height: 17px; }
.files .tall { height: 22px; }
.files td, .files th { padding: 0 2px; border: 1px solid #000; overflow: hidden; white-space: pre; text-align: left; }
.files th { height: 17px; background: #800000; color: #fff; text-align: center; font-size: 11px; line-height: 14px; border-top-width: 2px; }
.files .id { padding: 0; font-size: 9px; }
.files .end { text-align: right; }
.files a { color: #1a0dab; }
.files .current { outline: 2px solid #217346; outline-offset: -1px; position: relative; overflow: visible; }
.files .current::after { content: ""; position: absolute; left: -3px; bottom: -3px; width: 5px; height: 5px; background: #217346; }
.files .thick td:last-child { border-right-width: 2px; }
.files .thick td:first-child { border-left-width: 2px; }

/* Sheet tabs */
.sheet-bar { flex: none; height: 28px; display: flex; align-items: flex-start; padding-left: 21px; }
.hscroll { flex: none; width: 509px; display: flex; margin-top: 6px; }
.hscroll .thumb { width: 17px; }
.sheet-bar .dots { width: 30px; line-height: 28px; }
.sheet-tabs { flex: 1; display: flex; justify-content: flex-end; height: 25px; }
.sheet-tabs .bare { margin-right: 34px; padding-top: 3px; }
.sheet-tab { width: 105px; background: #fff; color: #217346; font-weight: 700; border: 1px solid #ababab; border-top: 0; border-bottom: 2px solid #217346; }
.sheet-nav { width: 97px; display: flex; align-items: center; gap: 24px; padding-left: 38px; opacity: .3; }

/* Status bar */
.status { flex: none; height: 22px; display: flex; align-items: center; background: #f1f1f1; border-top: 1px solid #c6c6c6; font-size: 11px; }
.ready { flex: 1; padding-left: 7px; }
.view { width: 38px; height: 21px; display: flex; align-items: center; justify-content: center; }
.view.on { background: #c8c8c8; }
.zoom-btn { width: 16px; display: flex; justify-content: center; }
.zoom { appearance: none; width: 100px; height: 21px; background: linear-gradient(#999, #999) center / 100% 1px no-repeat; }
.zoom::-webkit-slider-thumb { appearance: none; width: 4px; height: 11px; background: #666; }
.percent { width: 43px; text-align: right; padding-right: 5px; }
.taskbar { flex: none; height: 3px; display: flex; background: #000; padding-left: 297px; }
.run { width: 17px; background: #2f5a30; }
.idle { width: 23px; background: #1c1c1c; }
.open { width: 48px; margin-left: 5px; background: #333; }
```
